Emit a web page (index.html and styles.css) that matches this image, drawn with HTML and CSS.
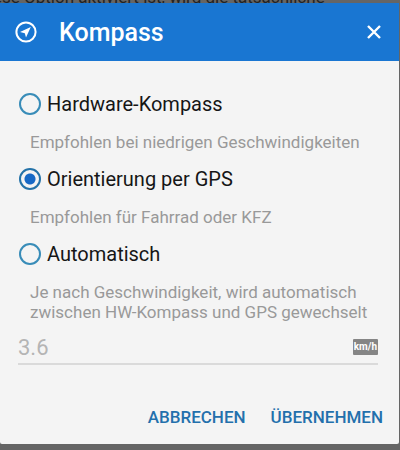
FILE: index.html
```
<!DOCTYPE html>
<html lang="de">
<head>
    <meta charset="UTF-8">
    <meta name="viewport" content="width=device-width, initial-scale=1.0">
    <title>Kompass</title>
    <link rel="stylesheet" href="styles.css">
</head>
<body>

    <!-- Einstellungen hinter dem Dialog -->
    <p class="backdrop-text">ese Option aktiviert ist, wird die tatsächliche</p>

    <form class="dialog" role="dialog" aria-labelledby="title">
        <header class="dialog-header">
            <svg class="compass-icon" viewBox="0 0 22 22" aria-hidden="true">
                <circle cx="11" cy="11" r="9.6" fill="none" stroke="currentColor" stroke-width="2"/>
                <path d="M15.8 6L5 11L9.8 12.2L11 16.6Z" fill="currentColor"/>
            </svg>
            <h1 id="title">Kompass</h1>
            <button type="button" class="close" aria-label="Schließen">
                <svg viewBox="0 0 14 14" aria-hidden="true">
                    <path d="M1 1L13 13M13 1L1 13" fill="none" stroke="currentColor" stroke-width="2.4"/>
                </svg>
            </button>
        </header>

        <div class="dialog-body">
            <div class="option">
                <label><input type="radio" name="kompass" value="hw">Hardware-Kompass</label>
                <p>Empfohlen bei niedrigen Geschwindigkeiten</p>
            </div>
            <div class="option">
                <label><input type="radio" name="kompass" value="gps" checked>Orientierung per GPS</label>
                <p>Empfohlen für Fahrrad oder KFZ</p>
            </div>
            <div class="option">
                <label><input type="radio" name="kompass" value="auto">Automatisch</label>
                <p>Je nach Geschwindigkeit, wird automatisch zwischen HW-Kompass und GPS gewechselt</p>
            </div>

            <div class="speed">
                <input type="text" id="speed" value="3.6" disabled>
                <label for="speed" class="unit">km/h</label>
            </div>
        </div>

        <footer class="dialog-actions">
            <button type="button">ABBRECHEN</button>
            <button type="submit">ÜBERNEHMEN</button>
        </footer>
    </form>

</body>
</html>
```
FILE: styles.css
```
* {
    box-sizing: border-box;
}

body {
    margin: 0;
    padding: 3px 1px 6px 0;
    background: #656565;
    font-family: Roboto, "Liberation Sans", sans-serif;
    overflow: hidden;
}

.backdrop-text {
    position: absolute;
    top: -13px;
    left: -7px;
    margin: 0;
    color: #222;
    font-size: 17px;
    line-height: 20px;
    white-space: nowrap;
}

.dialog {
    position: relative;
    background: #f4f4f4;
    border-radius: 0 0 2px 2px;
}

.dialog-header {
    display: flex;
    align-items: center;
    height: 58px;
    padding: 0 18px 0 15px;
    background: #1976d2;
    color: #fff;
}

.compass-icon {
    width: 22px;
    height: 22px;
}

.dialog-header h1 {
    flex: 1;
    margin: 0 0 0 22px;
    padding-top: 2px;
    font-size: 25px;
    font-weight: 500;
    line-height: 32px;
}

.close {
    display: flex;
    padding: 0;
    border: none;
    background: none;
    color: #fff;
    cursor: pointer;
}

.close svg {
    width: 14px;
    height: 14px;
}

.dialog-body {
    padding: 23px 21px 0 18px;
}

.option {
    margin-bottom: 7px;
}

.option label {
    display: flex;
    align-items: center;
    height: 40px;
    color: #161616;
    font-size: 20px;
}

.option input {
    appearance: none;
    width: 22px;
    height: 22px;
    margin: 0 6px 0 1px;
    border: 2px solid #388cb8;
    border-radius: 50%;
}

.option input:checked {
    border-color: #2472a8;
    background: radial-gradient(circle, #1769c6 5px, transparent 6px);
}

.option p {
    margin: 0;
    padding: 8px 0 0 12px;
    color: #999;
    font-size: 17px;
    line-height: 20px;
}

.speed {
    display: flex;
    align-items: center;
    height: 36px;
    padding-top: 2px;
    border-bottom: 2px solid #dadada;
}

.speed input {
    flex: 1;
    min-width: 0;
    padding: 0;
    border: none;
    background: none;
    color: #b5b5b5;
    font-family: inherit;
    font-size: 22px;
}

.unit {
    padding: 0 1px;
    border-radius: 1px;
    background: #858585;
    color: #fff;
    font-size: 10px;
    font-weight: 700;
    line-height: 16px;
}

.dialog-actions {
    display: flex;
    justify-content: flex-end;
    gap: 25px;
    padding: 36px 16px 11px;
}

.dialog-actions button {
    padding: 0;
    border: none;
    background: none;
    color: #2370ac;
    font-family: inherit;
    font-size: 17px;
    font-weight: 500;
    line-height: 32px;
    cursor: pointer;
}
```
